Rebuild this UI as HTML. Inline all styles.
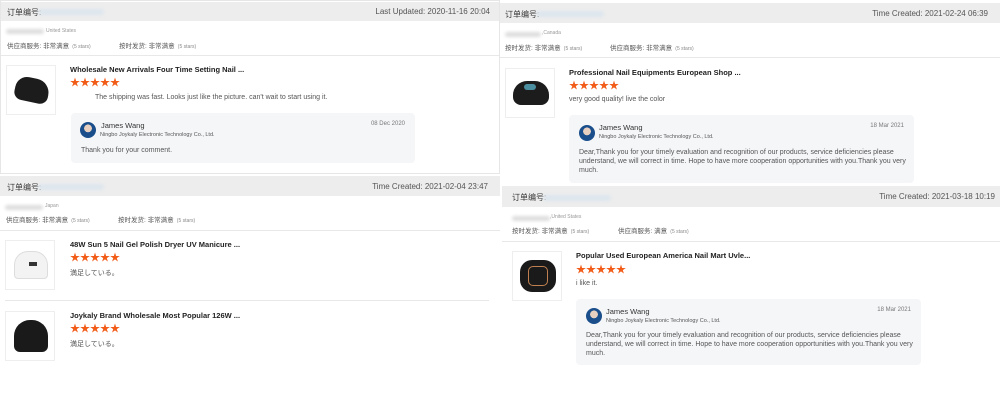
<!DOCTYPE html>
<html><head><meta charset="utf-8"><style>
*{margin:0;padding:0;box-sizing:border-box}
body{width:1000px;height:400px;background:#fff;position:relative;overflow:hidden;font-family:"Liberation Sans","Noto Sans CJK SC",sans-serif;color:#333}
.a{position:absolute;white-space:nowrap}
.hd{position:absolute;background:#ededed}
.hl{font-size:8px;color:#333}
.hr{font-size:8px;color:#555}
.blur{position:absolute;height:6px;background:#dde6ee;border-radius:3px;filter:blur(1.5px)}
.bg{position:absolute;height:5px;background:#ddd;border-radius:3px;filter:blur(1.5px)}
.s{font-size:6.5px;color:#555}
.sm{font-size:5px;color:#888}
.c{font-size:5px;color:#999}
.line{position:absolute;height:1px;background:#e8e8e8}
.img{position:absolute;width:50px;height:50px;border:1px solid #eee;background:#fff}
.t{font-size:7.5px;font-weight:bold;color:#222}
.st{font-size:10px;color:#f25c19;line-height:10px}
.tx{font-size:7px;color:#555}
.rb{position:absolute;background:#f5f6f8;border-radius:4px}
.av{position:absolute;width:16px;height:16px;border-radius:50%;background:radial-gradient(circle at 50% 40%,#e8d0c0 30%,#1a4f8c 32%);overflow:hidden}
.nm{font-size:7.5px;color:#333}
.co{font-size:5.5px;color:#555}
.dt{font-size:6px;color:#777}
.rt{font-size:7px;color:#555;line-height:9px;white-space:normal}
</style></head><body>

<!-- Panel 1 -->
<div style="position:absolute;left:0;top:0;width:500px;height:174px;border:1px solid #e6e6e6"></div>
<div class="hd" style="left:1px;top:2px;width:498px;height:19px"></div>
<div class="a hl" style="left:7px;top:7px">订单编号:</div>
<div class="blur" style="left:38px;top:9px;width:66px"></div>
<div class="a hr" style="right:510px;top:7px">Last Updated: 2020-11-16 20:04</div>
<div class="bg" style="left:6px;top:29px;width:38px"></div>
<div class="a c" style="left:46px;top:28px">United States</div>
<div class="a s" style="left:7px;top:40px">供应商服务: 非常满意 <span class="sm">&nbsp;(5 stars)</span></div>
<div class="a s" style="left:119px;top:40px">按时发货: 非常满意 <span class="sm">&nbsp;(5 stars)</span></div>
<div class="line" style="left:1px;top:55px;width:498px"></div>
<div class="img" style="left:6px;top:65px"><div style="position:absolute;left:8px;top:12px;width:34px;height:24px;background:#1c1c1c;border-radius:12px 14px 8px 8px;transform:rotate(12deg)"></div></div>
<div class="a t" style="left:70px;top:65px">Wholesale New Arrivals Four Time Setting Nail ...</div>
<div class="a st" style="left:70px;top:79px">★★★★★</div>
<div class="a tx" style="left:95px;top:94px">The shipping was fast. Looks just like the picture. can't wait to start using it.</div>
<div class="rb" style="left:71px;top:113px;width:344px;height:50px"></div>
<div class="av" style="left:80px;top:122px"></div>
<div class="a nm" style="left:101px;top:121px">James Wang</div>
<div class="a co" style="left:100px;top:132px">Ningbo Joykaly Electronic Technology Co., Ltd.</div>
<div class="a dt" style="right:595px;top:121px">08 Dec 2020</div>
<div class="a tx" style="left:81px;top:147px">Thank you for your comment.</div>

<!-- Panel 2 -->
<div class="hd" style="left:0;top:176px;width:500px;height:20px"></div>
<div class="a hl" style="left:7px;top:182px">订单编号:</div>
<div class="blur" style="left:38px;top:184px;width:66px"></div>
<div class="a hr" style="right:512px;top:182px">Time Created: 2021-02-04 23:47</div>
<div class="bg" style="left:5px;top:205px;width:38px"></div>
<div class="a c" style="left:45px;top:203px">Japan</div>
<div class="a s" style="left:6px;top:214px">供应商服务: 非常满意 <span class="sm">&nbsp;(5 stars)</span></div>
<div class="a s" style="left:118px;top:214px">按时发货: 非常满意 <span class="sm">&nbsp;(5 stars)</span></div>
<div class="line" style="left:0;top:230px;width:500px"></div>
<div class="img" style="left:5px;top:240px"><div style="position:absolute;left:8px;top:10px;width:34px;height:28px;background:#f3f3f3;border:1px solid #ddd;border-radius:14px 14px 4px 4px"></div><div style="position:absolute;left:23px;top:21px;width:8px;height:4px;background:#333"></div></div>
<div class="a t" style="left:70px;top:240px">48W Sun 5 Nail Gel Polish Dryer UV Manicure ...</div>
<div class="a st" style="left:70px;top:254px">★★★★★</div>
<div class="a tx" style="left:70px;top:268px">満足している。</div>
<div class="line" style="left:5px;top:300px;width:484px"></div>
<div class="img" style="left:5px;top:311px"><div style="position:absolute;left:8px;top:8px;width:34px;height:32px;background:#1a1a1a;border-radius:16px 16px 6px 6px"></div></div>
<div class="a t" style="left:70px;top:311px">Joykaly Brand Wholesale Most Popular 126W ...</div>
<div class="a st" style="left:70px;top:325px">★★★★★</div>
<div class="a tx" style="left:70px;top:339px">満足している。</div>

<!-- Panel 3 -->
<div class="hd" style="left:500px;top:3px;width:500px;height:20px"></div>
<div class="a hl" style="left:505px;top:9px">订单编号:</div>
<div class="blur" style="left:536px;top:11px;width:68px"></div>
<div class="a hr" style="right:12px;top:9px">Time Created: 2021-02-24 06:39</div>
<div class="bg" style="left:505px;top:32px;width:36px"></div>
<div class="a c" style="left:542px;top:30px">,Canada</div>
<div class="a s" style="left:505px;top:42px">按时发货: 非常满意 <span class="sm">&nbsp;(5 stars)</span></div>
<div class="a s" style="left:610px;top:42px">供应商服务: 非常满意 <span class="sm">&nbsp;(5 stars)</span></div>
<div class="line" style="left:500px;top:57px;width:500px"></div>
<div class="img" style="left:505px;top:68px"><div style="position:absolute;left:7px;top:12px;width:36px;height:24px;background:#1c1c1c;border-radius:14px 14px 8px 8px"></div><div style="position:absolute;left:18px;top:15px;width:12px;height:6px;background:#4a8ea0;border-radius:3px"></div></div>
<div class="a t" style="left:569px;top:68px">Professional Nail Equipments European Shop ...</div>
<div class="a st" style="left:569px;top:82px">★★★★★</div>
<div class="a tx" style="left:569px;top:96px">very good quality! live the color</div>
<div class="rb" style="left:569px;top:115px;width:345px;height:68px"></div>
<div class="av" style="left:579px;top:125px"></div>
<div class="a nm" style="left:599px;top:123px">James Wang</div>
<div class="a co" style="left:599px;top:134px">Ningbo Joykaly Electronic Technology Co., Ltd.</div>
<div class="a dt" style="right:96px;top:123px">18 Mar 2021</div>
<div class="a rt" style="left:579px;top:148px;width:330px">Dear,Thank you for your timely evaluation and recognition of our products, service deficiencies please understand, we will correct in time. Hope to have more cooperation opportunities with you.Thank you very much.</div>

<!-- Panel 4 -->
<div class="hd" style="left:502px;top:186px;width:498px;height:21px"></div>
<div class="a hl" style="left:512px;top:192px">订单编号:</div>
<div class="blur" style="left:543px;top:195px;width:68px"></div>
<div class="a hr" style="right:5px;top:192px">Time Created: 2021-03-18 10:19</div>
<div class="bg" style="left:512px;top:216px;width:38px"></div>
<div class="a c" style="left:550px;top:214px">,United States</div>
<div class="a s" style="left:512px;top:225px">按时发货: 非常满意 <span class="sm">&nbsp;(5 stars)</span></div>
<div class="a s" style="left:618px;top:225px">供应商服务: 满意 <span class="sm">&nbsp;(5 stars)</span></div>
<div class="line" style="left:502px;top:241px;width:498px"></div>
<div class="img" style="left:512px;top:251px"><div style="position:absolute;left:7px;top:8px;width:36px;height:32px;background:#1a1a1a;border-radius:12px"></div><div style="position:absolute;left:15px;top:14px;width:20px;height:20px;border:1px solid #c08050;border-radius:5px"></div></div>
<div class="a t" style="left:576px;top:251px">Popular Used European America Nail Mart Uvle...</div>
<div class="a st" style="left:576px;top:266px">★★★★★</div>
<div class="a tx" style="left:576px;top:280px">i like it.</div>
<div class="rb" style="left:576px;top:299px;width:345px;height:66px"></div>
<div class="av" style="left:586px;top:308px"></div>
<div class="a nm" style="left:606px;top:307px">James Wang</div>
<div class="a co" style="left:606px;top:318px">Ningbo Joykaly Electronic Technology Co., Ltd.</div>
<div class="a dt" style="right:89px;top:307px">18 Mar 2021</div>
<div class="a rt" style="left:586px;top:331px;width:330px">Dear,Thank you for your timely evaluation and recognition of our products, service deficiencies please understand, we will correct in time. Hope to have more cooperation opportunities with you.Thank you very much.</div>

</body></html>
